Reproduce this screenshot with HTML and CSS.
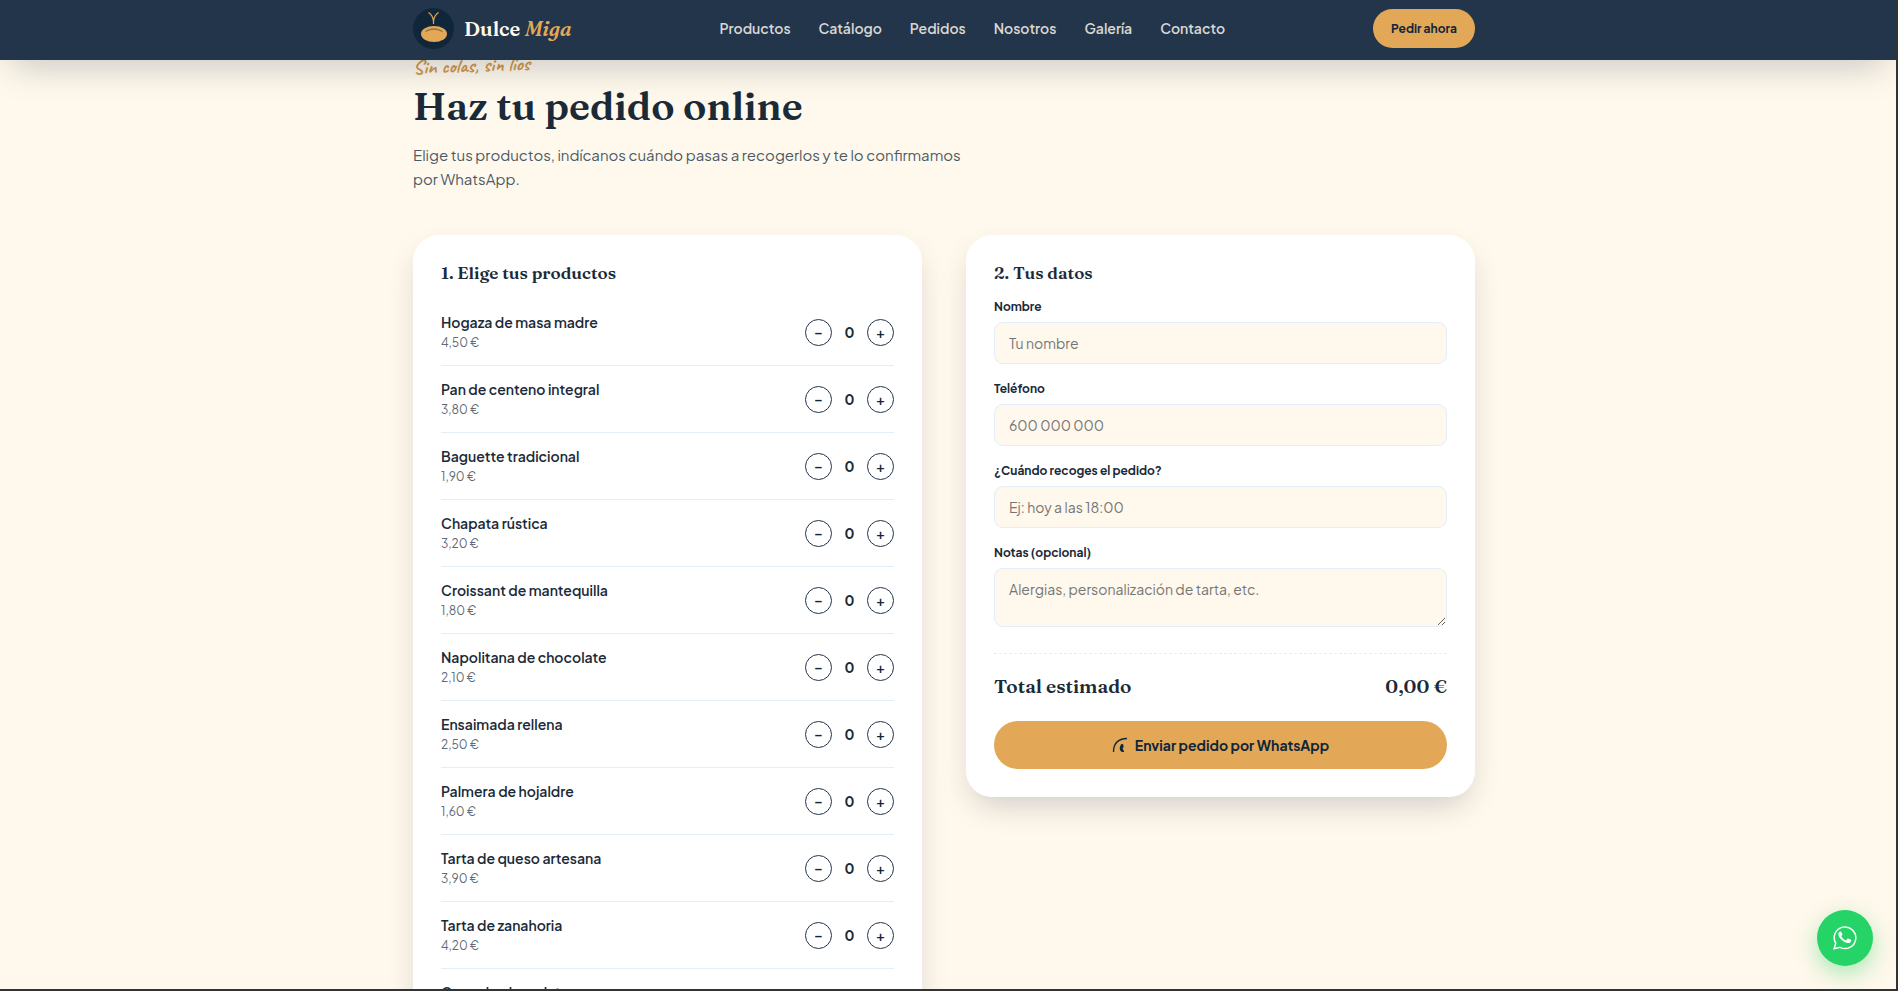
FILE: index.html
```html
<!DOCTYPE html>
<html lang="es">
<head>
    <meta charset="UTF-8">
    <meta name="viewport" content="width=device-width, initial-scale=1.0">
    <title>Dulce Miga - Pedidos</title>
    <link rel="stylesheet" href="styles.css">
</head>
<body>
    <header class="header">
        <div class="container header-inner">
            <a href="#" class="brand">
                <svg class="brand-logo" viewBox="0 0 41 41" aria-hidden="true">
                    <circle cx="20.5" cy="20.5" r="20.5" fill="#10263a"/>
                    <ellipse cx="21" cy="26" rx="13" ry="8" fill="#e3a857"/>
                    <path d="M12.500 23.500q8.500-5 17 0" fill="none" stroke="#8a6f48" stroke-width="1.300"/>
                    <path d="M20.500 16V13.500Q20 7.500 15.500 4.500M20.500 13.500Q21 7.500 25.500 4.500" fill="none" stroke="#e3a857" stroke-width="1.200"/>
                </svg>
                <span class="brand-name">Dulce <em>Miga</em></span>
            </a>
            <nav class="nav">
                <a href="#productos">Productos</a>
                <a href="#catalogo">Catálogo</a>
                <a href="#pedidos">Pedidos</a>
                <a href="#nosotros">Nosotros</a>
                <a href="#galeria">Galería</a>
                <a href="#contacto">Contacto</a>
            </nav>
            <a href="#pedidos" class="btn-order">Pedir ahora</a>
        </div>
    </header>

    <main class="main">
        <div class="container" id="pedidos">
            <div class="section-head">
                <span class="eyebrow">Sin colas, sin líos</span>
                <h1>Haz tu pedido online</h1>
                <p>Elige tus productos, indícanos cuándo pasas a recogerlos y te lo confirmamos por WhatsApp.</p>
            </div>

            <div class="order-grid">
                <section class="card">
                    <h2>1. Elige tus productos</h2>
                    <ul class="product-list" id="productList"></ul>
                </section>

                <form class="card">
                    <h2>2. Tus datos</h2>
                    <div class="field">
                        <label for="nombre">Nombre</label>
                        <input type="text" id="nombre" placeholder="Tu nombre">
                    </div>
                    <div class="field">
                        <label for="telefono">Teléfono</label>
                        <input type="tel" id="telefono" placeholder="600 000 000">
                    </div>
                    <div class="field">
                        <label for="recogida">¿Cuándo recoges el pedido?</label>
                        <input type="text" id="recogida" placeholder="Ej: hoy a las 18:00">
                    </div>
                    <div class="field">
                        <label for="notas">Notas (opcional)</label>
                        <textarea id="notas" placeholder="Alergias, personalización de tarta, etc."></textarea>
                    </div>
                    <div class="total">
                        <span>Total estimado</span>
                        <span id="total">0,00 €</span>
                    </div>
                    <button type="submit" class="btn-send">
                        <svg viewBox="0 0 16 16" aria-hidden="true">
                            <path d="M1.500 15C1.500 7 6 1.800 15 1.500" fill="none" stroke="currentColor" stroke-width="1.300"/>
                            <path d="M9 7.500c1-.9 2.300-.4 2.400.8l.2 1.500c0 .7-.6 1-.8 1.400.1 1.300.6 2.200 1.200 2.800v1c-3.600.6-5.800-3.200-3-7.500z" fill="currentColor"/>
                        </svg>
                        Enviar pedido por WhatsApp
                    </button>
                </form>
            </div>
        </div>
    </main>

    <a href="#whatsapp" class="whatsapp" aria-label="WhatsApp">
        <svg viewBox="0 0 24 24" aria-hidden="true">
            <path d="M1.200 22.800l1.500-5.600A10.800 10.800 0 1 1 7 21.300z" fill="none" stroke="#fff" stroke-width="1.500"/>
            <path d="M8.300 6.200c-.3-.6-.6-.6-1-.6-.9 0-1.900 1-1.900 2.600 0 1.700 1.100 3.300 2.500 4.900 1.900 2.200 4.400 4 7.200 4 1.500 0 2.800-1 3-2.200.1-.6.100-1-.1-1.100l-2.700-1.300c-.4-.2-.7-.1-.9.200l-1 1.300c-.2.300-.5.300-.8.200-1.700-.7-3.200-2-4.200-3.800-.2-.3 0-.5.200-.7l.8-1.100c.1-.2.100-.4 0-.6z" fill="#fff"/>
        </svg>
    </a>

    <script>
        var products = [
            ["Hogaza de masa madre", "4,50 €"],
            ["Pan de centeno integral", "3,80 €"],
            ["Baguette tradicional", "1,90 €"],
            ["Chapata rústica", "3,20 €"],
            ["Croissant de mantequilla", "1,80 €"],
            ["Napolitana de chocolate", "2,10 €"],
            ["Ensaimada rellena", "2,50 €"],
            ["Palmera de hojaldre", "1,60 €"],
            ["Tarta de queso artesana", "3,90 €"],
            ["Tarta de zanahoria", "4,20 €"],
            ["Coca de chocolate", "3,50 €"]
        ];

        var list = document.getElementById("productList");
        for (var i = 0; i < products.length; i++) {
            var item = document.createElement("li");
            item.className = "product";
            item.innerHTML = `
                <div>
                    <div class="product-name">${products[i][0]}</div>
                    <div class="product-price">${products[i][1]}</div>
                </div>
                <div class="qty">
                    <button type="button" aria-label="Quitar">–</button>
                    <span>0</span>
                    <button type="button" aria-label="Añadir">+</button>
                </div>
            `;
            list.appendChild(item);
        }
    </script>
</body>
</html>
```

FILE: styles.css
```css
* {
    box-sizing: border-box;
}

body {
    margin: 0;
    height: 100vh;
    overflow: hidden;
    border-right: 2px solid #333;
    border-bottom: 2px solid #333;
    background-color: #fff8ec;
    color: #1b2a38;
    font-family: "Plus Jakarta Sans", Inter, "Liberation Sans", sans-serif;
    font-size: 14px;
}

.container {
    width: 1062px;
    max-width: 92%;
    margin: 0 auto;
}

.header {
    position: relative;
    z-index: 2;
    height: 60px;
    padding: 0 8px 4px 0;
    background-color: #23354a;
    box-shadow: 0 16px 36px -12px rgba(16, 38, 58, 0.26);
}

.header-inner {
    display: flex;
    justify-content: space-between;
    align-items: center;
    height: 56px;
}

.brand {
    display: flex;
    align-items: center;
    gap: 10px;
    color: #fff8ec;
    text-decoration: none;
}

.brand-logo {
    width: 41px;
    height: 41px;
}

.brand-name {
    font-family: Fraunces, "Liberation Serif", serif;
    font-size: 20px;
    font-weight: 600;
}

.brand-name em {
    color: #e3a857;
}

.nav {
    display: flex;
    gap: 28px;
}

.nav a {
    color: #d9d7d2;
    font-weight: 600;
    text-decoration: none;
}

.btn-order {
    padding: 11px 18px;
    border-radius: 20px;
    background-color: #e3a857;
    color: #10263a;
    font-size: 12px;
    font-weight: 700;
    line-height: 17px;
    text-decoration: none;
}

.main {
    padding-right: 8px;
}

.section-head {
    max-width: 560px;
    margin-bottom: 44px;
}

.eyebrow {
    display: block;
    width: max-content;
    margin-bottom: 10px;
    color: #d2964a;
    font-family: Caveat, "Liberation Serif", cursive;
    font-size: 20px;
    font-weight: 600;
    line-height: 12px;
    transform: rotate(-2deg);
}

h1 {
    margin: 0 0 13px;
    font-family: Fraunces, "Liberation Serif", serif;
    font-size: 39px;
    font-weight: 600;
    line-height: 48px;
}

.section-head p {
    margin: 0;
    color: #4c5a66;
    font-size: 15px;
    line-height: 24px;
}

.order-grid {
    display: grid;
    grid-template-columns: 1fr 1fr;
    gap: 44px;
    align-items: start;
}

.card {
    padding: 28px;
    border-radius: 26px;
    background-color: #fff;
    box-shadow: 0 14px 32px -8px rgba(16, 38, 58, 0.22);
}

h2 {
    margin: 0 0 15px;
    font-family: Fraunces, "Liberation Serif", serif;
    font-size: 17px;
    font-weight: 600;
    line-height: 20px;
}

.product-list {
    margin: 0;
    padding: 1px 0 0;
    list-style: none;
}

.product {
    display: flex;
    justify-content: space-between;
    align-items: center;
    height: 67px;
    border-bottom: 1px solid #e3eefa;
}

.product-name {
    font-weight: 600;
    line-height: 20px;
}

.product-price {
    color: #5f6b76;
    font-size: 12px;
    line-height: 21px;
}

.qty {
    display: flex;
    align-items: center;
}

.qty span {
    width: 35px;
    font-weight: 700;
    text-align: center;
}

.qty button {
    width: 27px;
    height: 27px;
    padding: 0;
    border: 1px solid #23354a;
    border-radius: 50%;
    background-color: #fff;
    color: #10263a;
    font-family: inherit;
    font-size: 14px;
    font-weight: 600;
    cursor: pointer;
}

.field {
    margin-bottom: 16px;
}

.field label {
    display: block;
    margin-bottom: 6px;
    font-size: 12px;
    font-weight: 700;
    line-height: 18px;
}

.field input,
.field textarea {
    display: block;
    width: 100%;
    height: 42px;
    padding: 11px 14px;
    border: 1px solid #e3eefa;
    border-radius: 9px;
    background-color: #fff8ec;
    font-family: inherit;
    font-size: 14px;
    line-height: 18px;
}

.field textarea {
    height: 59px;
    resize: vertical;
}

.total {
    display: flex;
    justify-content: space-between;
    margin-top: 26px;
    padding: 20px 0 23px;
    border-top: 1px dashed #e3eefa;
    font-family: Fraunces, "Liberation Serif", serif;
    font-size: 19px;
    font-weight: 600;
    line-height: 24px;
}

.btn-send {
    display: flex;
    justify-content: center;
    align-items: center;
    gap: 7px;
    width: 100%;
    height: 48px;
    border: none;
    border-radius: 24px;
    background-color: #e3a857;
    color: #10263a;
    font-family: inherit;
    font-size: 14px;
    font-weight: 700;
    cursor: pointer;
}

.btn-send svg {
    width: 16px;
    height: 16px;
}

.whatsapp {
    position: fixed;
    right: 25px;
    bottom: 25px;
    display: flex;
    justify-content: center;
    align-items: center;
    width: 56px;
    height: 56px;
    border-radius: 50%;
    background-color: #25d366;
    box-shadow: 0 8px 22px rgba(37, 211, 102, 0.4);
}

.whatsapp svg {
    width: 24px;
    height: 24px;
}
```
